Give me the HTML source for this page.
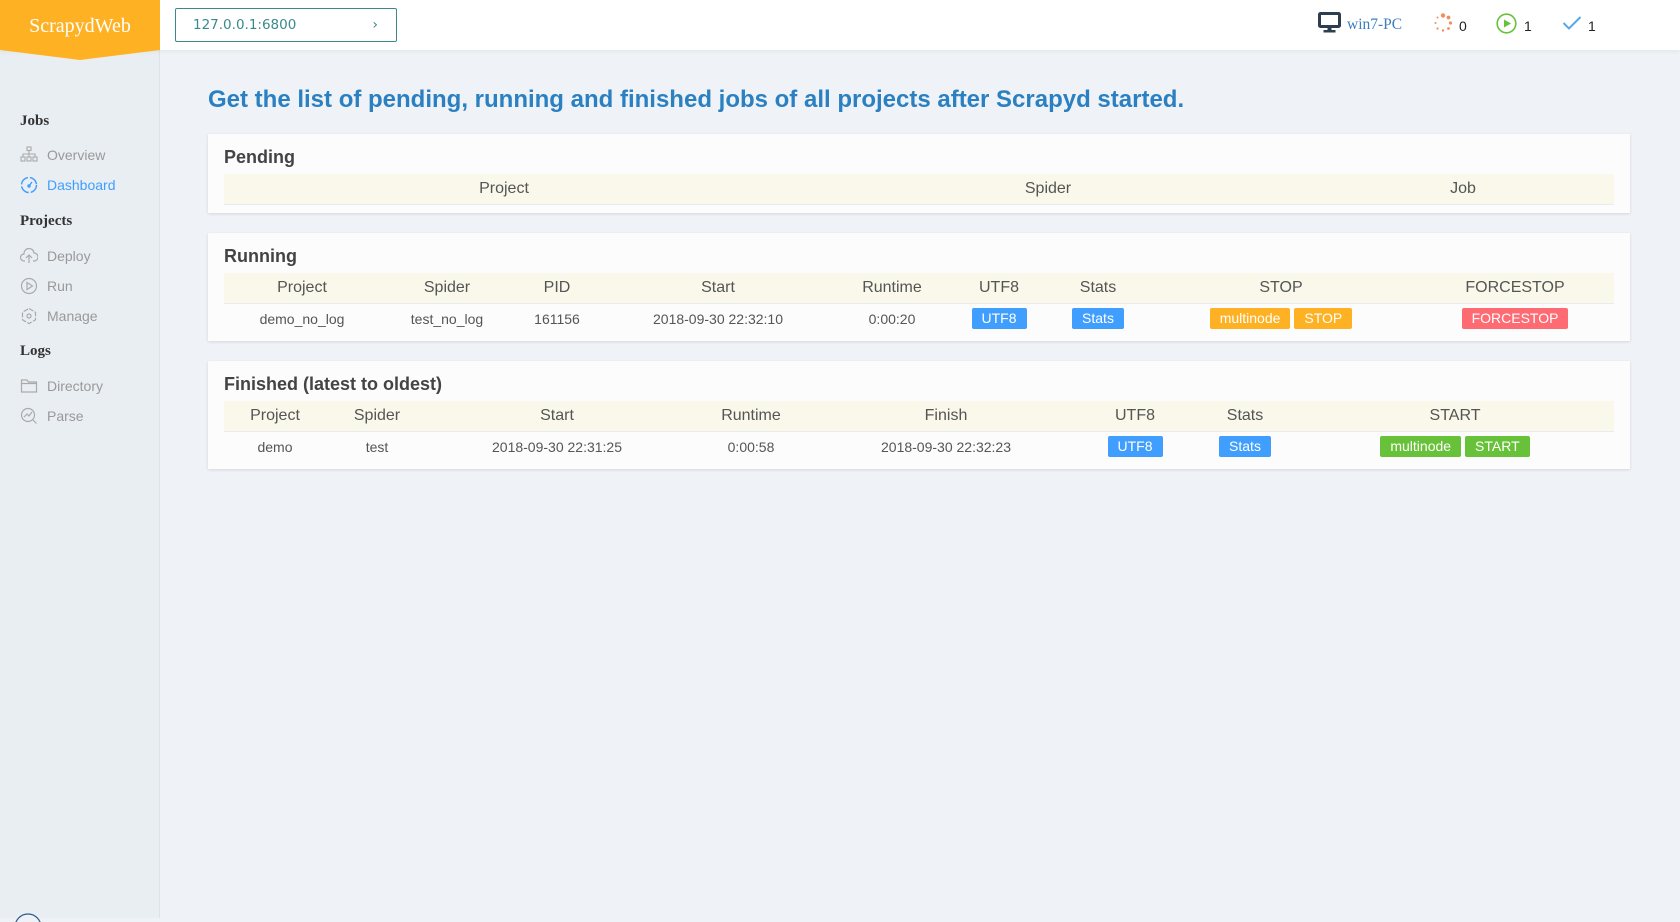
<!DOCTYPE html>
<html><head><meta charset="utf-8"><style>
*{margin:0;padding:0;box-sizing:border-box}
body{width:1680px;height:918px;overflow:hidden;background:#eff3f7;font-family:"Liberation Sans",sans-serif;position:relative}
.side{position:absolute;left:0;top:0;width:160px;height:918px;background:#e9eef3;border-right:1px solid #dde3ea}
.top{position:absolute;left:0;top:0;width:1680px;height:50px;background:#fff;box-shadow:0 2px 4px rgba(0,0,0,.05)}
.logo{position:absolute;left:0;top:0;width:160px;height:60px;background:#ffb124;clip-path:polygon(0 0,160px 0,160px 50px,80px 60px,0 50px);color:#fff;font-family:"Liberation Serif",serif;font-size:20px;text-align:center;line-height:52px}
.addr{position:absolute;left:175px;top:8px;width:222px;height:34px;border:1px solid #3a8a8c;border-radius:2px;color:#3a8a8c;font-size:13.5px;line-height:32px;padding-left:17px;font-family:"DejaVu Sans",sans-serif}
.addr span{position:absolute;right:18px;top:0;font-size:14px}
.t{position:absolute;font-size:14px;line-height:16px}
.sec{position:absolute;left:20px;font-family:"Liberation Serif",serif;font-weight:bold;font-size:15px;color:#333}
.it{position:absolute;left:20px;font-size:14px;color:#999;display:flex;align-items:center}
.it svg{width:18px;height:18px;margin-right:9px}
.it.act{color:#409eff}
h1{position:absolute;left:208px;top:86px;font-size:24px;color:#2b80c2;font-weight:bold;white-space:nowrap}
.card{position:absolute;left:208px;width:1422px;background:#fcfcfc;box-shadow:0 1px 3px rgba(0,0,0,.12)}
.card h2{position:absolute;left:16px;font-size:18px;color:#444;font-weight:bold}
table{position:absolute;left:16px;border-collapse:collapse;table-layout:fixed;width:1390px}
th{background:#f9f8ea;font-weight:normal;font-size:16px;color:#555;height:30px;border-bottom:1px solid #e8ecf0;text-align:center}
td{font-size:14px;color:#555;height:31px;text-align:center}
.b{display:inline-block;color:#fff;font-size:14px;height:21px;line-height:21px;padding:0 10px;border-radius:2px;margin:0 2px}
.bl{background:#409eff}.or{background:#ffb124}.rd{background:#ff6b72}.gr{background:#67c23a}
</style></head><body>
<div class="side"></div>
<div class="top"></div>
<div class="logo">ScrapydWeb</div>
<div class="addr">127.0.0.1:6800<span>&#8250;</span></div>

<svg style="position:absolute;left:1318px;top:12px" width="23" height="21" viewBox="0 0 23 21"><rect x="1.5" y="1.5" width="20" height="13" rx="1" fill="none" stroke="#2c3e50" stroke-width="3"/><rect x="9.5" y="15" width="4" height="3" fill="#2c3e50"/><rect x="5.5" y="18" width="12" height="2.5" fill="#2c3e50"/></svg>
<div class="t" style="left:1347px;top:17px;color:#3b7fc0;font-family:'Liberation Serif',serif;font-size:15.5px">win7-PC</div>
<svg style="position:absolute;left:1433px;top:13px" width="20" height="20" viewBox="0 0 20 20" fill="#f28d5e"><circle cx="10" cy="2.5" r="2.2"/><circle cx="15.5" cy="4.5" r="1.9"/><circle cx="17.5" cy="10" r="1.6"/><circle cx="15.5" cy="15.5" r="1.4"/><circle cx="10" cy="17.5" r="1.2"/><circle cx="4.5" cy="15.5" r="1.1"/><circle cx="2.5" cy="10" r="1"/><circle cx="4.5" cy="4.5" r="1"/></svg>
<div class="t" style="left:1459px;top:18px;color:#222">0</div>
<svg style="position:absolute;left:1496px;top:13px" width="21" height="21" viewBox="0 0 21 21"><circle cx="10.5" cy="10.5" r="9.3" fill="none" stroke="#67c23a" stroke-width="1.6"/><path d="M8 6.5 L15 10.5 L8 14.5Z" fill="#67c23a"/></svg>
<div class="t" style="left:1524px;top:18px;color:#222">1</div>
<svg style="position:absolute;left:1562px;top:15px" width="20" height="16" viewBox="0 0 20 16"><path d="M1.5 8 L7 13.5 L18.5 2" fill="none" stroke="#5aa7e6" stroke-width="2"/></svg>
<div class="t" style="left:1588px;top:18px;color:#222">1</div>

<div class="sec" style="top:113px">Jobs</div>
<div class="it" style="top:146px"><svg viewBox="0 0 18 18" fill="none" stroke="#aaa" stroke-width="1.1"><rect x="7" y="1" width="4" height="3.5"/><path d="M9 4.5V8M3 11V8H15V11M9 8V11"/><rect x="1" y="11" width="4" height="4"/><rect x="7" y="11" width="4" height="4"/><rect x="13" y="11" width="4" height="4"/></svg>Overview</div>
<div class="it act" style="top:176px"><svg viewBox="0 0 18 18" fill="none" stroke="#409eff" stroke-width="1.4"><circle cx="9" cy="9" r="7.5" stroke-dasharray="10 2"/><path d="M9 10L12 6"/><circle cx="9" cy="10" r="1" fill="#409eff"/></svg>Dashboard</div>
<div class="sec" style="top:213px">Projects</div>
<div class="it" style="top:247px"><svg viewBox="0 0 18 18" fill="none" stroke="#aaa" stroke-width="1.2"><path d="M5 14H4A3.5 3.5 0 0 1 4 7 5 5 0 0 1 14 6 4 4 0 0 1 14 14H13"/><path d="M9 16V8M6 11L9 8 12 11"/></svg>Deploy</div>
<div class="it" style="top:277px"><svg viewBox="0 0 18 18" fill="none" stroke="#aaa" stroke-width="1.2"><circle cx="9" cy="9" r="7.5"/><path d="M7 5.5L12.5 9 7 12.5Z"/></svg>Run</div>
<div class="it" style="top:307px"><svg viewBox="0 0 18 18" fill="none" stroke="#aaa" stroke-width="1.2"><path d="M9 1.5L15.5 5.2V12.8L9 16.5 2.5 12.8V5.2Z" stroke-dasharray="5 1.5"/><circle cx="9" cy="9" r="2"/></svg>Manage</div>
<div class="sec" style="top:343px">Logs</div>
<div class="it" style="top:377px"><svg viewBox="0 0 18 18" fill="none" stroke="#aaa" stroke-width="1.2"><path d="M1.5 3H7L8.5 5H16.5V15H1.5Z M1.5 6.5H16.5"/></svg>Directory</div>
<div class="it" style="top:407px"><svg viewBox="0 0 18 18" fill="none" stroke="#aaa" stroke-width="1.2"><circle cx="8" cy="8" r="6.5"/><path d="M4 10L7 7 9 9 12 5M13 13L16.5 16.5"/></svg>Parse</div>
<svg style="position:absolute;left:13px;top:912px" width="30" height="10"><circle cx="15" cy="15" r="13" fill="#eef2f6" stroke="#2c5a8a" stroke-width="1.2"/></svg>

<h1>Get the list of pending, running and finished jobs of all projects after Scrapyd started.</h1>

<div class="card" style="top:134px;height:79px">
<h2 style="top:13px">Pending</h2>
<table style="top:40px"><colgroup><col style="width:560px"><col style="width:528px"><col style="width:302px"></colgroup>
<tr><th>Project</th><th>Spider</th><th>Job</th></tr></table>
</div>

<div class="card" style="top:233px;height:108px">
<h2 style="top:13px">Running</h2>
<table style="top:40px"><colgroup><col style="width:156px"><col style="width:134px"><col style="width:86px"><col style="width:236px"><col style="width:112px"><col style="width:102px"><col style="width:96px"><col style="width:270px"><col style="width:198px"></colgroup>
<tr><th>Project</th><th>Spider</th><th>PID</th><th>Start</th><th>Runtime</th><th>UTF8</th><th>Stats</th><th>STOP</th><th>FORCESTOP</th></tr>
<tr><td>demo_no_log</td><td>test_no_log</td><td>161156</td><td>2018-09-30 22:32:10</td><td>0:00:20</td><td><span class="b bl">UTF8</span></td><td><span class="b bl">Stats</span></td><td><span class="b or">multinode</span><span class="b or">STOP</span></td><td><span class="b rd">FORCESTOP</span></td></tr>
</table>
</div>

<div class="card" style="top:361px;height:108px">
<h2 style="top:13px">Finished (latest to oldest)</h2>
<table style="top:40px"><colgroup><col style="width:102px"><col style="width:102px"><col style="width:258px"><col style="width:130px"><col style="width:260px"><col style="width:118px"><col style="width:102px"><col style="width:318px"></colgroup>
<tr><th>Project</th><th>Spider</th><th>Start</th><th>Runtime</th><th>Finish</th><th>UTF8</th><th>Stats</th><th>START</th></tr>
<tr><td>demo</td><td>test</td><td>2018-09-30 22:31:25</td><td>0:00:58</td><td>2018-09-30 22:32:23</td><td><span class="b bl">UTF8</span></td><td><span class="b bl">Stats</span></td><td><span class="b gr">multinode</span><span class="b gr">START</span></td></tr>
</table>
</div>
</body></html>
